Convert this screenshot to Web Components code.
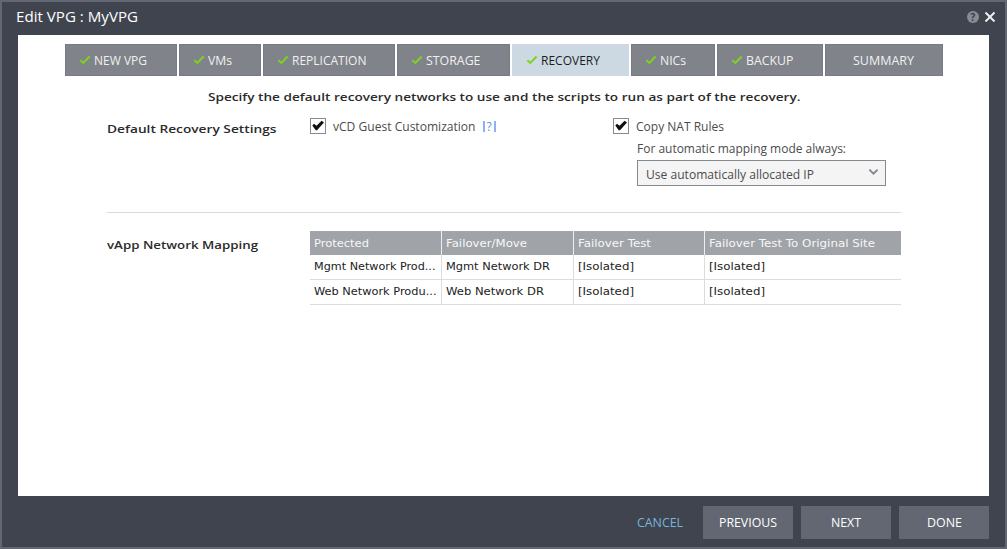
<!DOCTYPE html>
<html lang="en">
<head>
<meta charset="utf-8">
<title>Edit VPG : MyVPG</title>
<style>
html, body { margin: 0; height: 100%; overflow: hidden; }
body { font-family: "Open Sans", sans-serif; font-size: 12px; color: #4c4c4c; }
</style>
</head>
<body>
<vpg-dialog></vpg-dialog>
<script>
function define(name, html, setup) {
  const t = document.createElement('template');
  t.innerHTML = html;
  customElements.define(name, class extends HTMLElement {
    connectedCallback() {
      if (this.shadowRoot) return;
      const root = this.attachShadow({ mode: 'open' });
      root.append(t.content.cloneNode(true));
      if (setup) setup(this, root);
    }
  });
}

/* One line of text stretched horizontally to the width given by "w". */
define('fit-text', `
<style>
:host { display: block; white-space: nowrap; overflow: visible; }
span { display: inline-block; transform-origin: 0 50%; }
</style><span><slot></slot></span>`, (el, root) => {
  const w = parseFloat(el.getAttribute('w'));
  el.style.width = w + 'px';
  const span = root.querySelector('span');
  requestAnimationFrame(() => {
    const n = span.offsetWidth && span.getBoundingClientRect().width;
    if (n) span.style.transform = 'scaleX(' + w / n + ')';
  });
});

define('wizard-tab', `
<style>
:host { display: flex; box-sizing: border-box; height: 32px; align-items: center; padding: 2px 0 0 14px;
  background: #80838a; box-shadow: inset 0 0 0 1px #787b83; color: #f0f0f1; font-size: 12px; line-height: 20px; }
:host([active]) { background: #ccd9e3; box-shadow: none; color: #1d1d1d; }
:host([plain]) { padding-left: 28px; }
:host([plain]) svg { display: none; }
svg { width: 12px; height: 10px; margin: -3px 3px 0 0; flex: none; }
</style>
<svg viewBox="0 0 12 10"><path d="M1.4 5.2 4.3 7.9 10.6 1.6" fill="none" stroke="#7ed321" stroke-width="2.1"/></svg><slot></slot>`);

define('check-box', `
<style>
:host { display: flex; align-items: center; height: 16px; }
.box { box-sizing: border-box; width: 16px; height: 16px; border: 1px solid #858a92; background: #fff; margin-right: 7px; flex: none; }
svg { display: block; width: 14px; height: 14px; }
</style>
<div class="box"><svg viewBox="0 0 14 14"><path d="M1.3 6.5 3 4.7 5.5 6.7 10.6 1.7 13 3.5 6 11.3 4.7 11.3Z" fill="#111"/></svg></div><slot></slot>`);

define('select-box', `
<style>
:host { display: flex; box-sizing: border-box; width: 249px; height: 26px; border: 1px solid #858a92; background: #f4f4f4;
  align-items: center; justify-content: space-between; padding: 3px 6px 0 8px; }
svg { width: 11px; height: 8px; margin-top: -6px; }
</style>
<slot></slot><svg viewBox="0 0 11 8"><path d="M1.4 1.6 5.5 5.7 9.6 1.6" fill="none" stroke="#868a92" stroke-width="2"/></svg>`);

define('push-button', `
<style>
:host { display: flex; width: 90px; height: 33px; align-items: center; justify-content: center; background: #626772; color: #fff; }
</style><slot></slot>`);

define('network-table', `
<style>
:host { display: block; width: 591px; font-family: "DejaVu Sans", Verdana, sans-serif; font-size: 11px; color: #222; }
.row { display: grid; grid-template-columns: 132px 131.5px 131.5px 196px; height: 24px; border-bottom: 1px solid #dcdcdc; }
.row.head { background: #a0a3a8; color: #f7f7f7; border: 0; }
.row > div { box-sizing: border-box; border-right: 1px solid #dcdcdc; padding: 0 0 1px 4px; display: flex; align-items: center; }
.row.head > div { border-color: #eeeeef; padding: 1px 0 0 4px; }
.row > div:last-child { border-right: 0; }
</style>
<div class="row head"><div><fit-text w="55">Protected</fit-text></div><div><fit-text w="81">Failover/Move</fit-text></div><div><fit-text w="73">Failover Test</fit-text></div><div><fit-text w="166">Failover Test To Original Site</fit-text></div></div>
<div class="row"><div><fit-text w="121.5">Mgmt Network Prod...</fit-text></div><div><fit-text w="104">Mgmt Network DR</fit-text></div><div><fit-text w="56">[Isolated]</fit-text></div><div><fit-text w="56">[Isolated]</fit-text></div></div>
<div class="row"><div><fit-text w="122.5">Web Network Produ...</fit-text></div><div><fit-text w="98">Web Network DR</fit-text></div><div><fit-text w="56">[Isolated]</fit-text></div><div><fit-text w="56">[Isolated]</fit-text></div></div>`);

define('vpg-dialog', `
<style>
:host { display: flex; flex-direction: column; box-sizing: border-box; width: 1007px; height: 549px; border: 2px solid #626772; background: #3f444f; padding: 0 16px; }
header { height: 33px; display: flex; justify-content: space-between; align-items: center; color: #fff; font-size: 15px; margin: 0 -7px 0 -2px; }
header fit-text { margin-top: -5px; }
header svg { margin-top: -5px; display: block; }
.icons { display: flex; align-items: center; gap: 5px; }
.help { box-sizing: border-box; width: 12px; height: 12px; border-radius: 50%; background: #888b91; color: #3a3e48; font: bold 10px/12px "Open Sans", sans-serif; text-align: center; margin-top: -3px; }
main { height: 461px; background: #fff; box-sizing: border-box; padding-top: 9px; }
nav { display: grid; grid-template-columns: 112px 82px 132px 113px 117px 84px 106px 118px; gap: 2px; margin-left: 47px; }
.intro { margin: 11px 0 0 190px; font-size: 11.5px; font-weight: 600; line-height: 20px; height: 18px; color: #2b2b2b; }
h2 { margin: 0; font-size: 11.5px; line-height: 18px; font-weight: 600; color: #2b2b2b; }
section { display: grid; grid-template-columns: 203px 303px 288px; margin-left: 89px; width: 794px; }
.settings { height: 108px; box-sizing: border-box; border-bottom: 1px solid #dadada; padding-top: 13px; }
.settings h2 { margin-top: 2px; }
.under { padding-left: 24px; line-height: 17px; }
.under fit-text { margin: 6px 0 3px; }
.under select-box fit-text { margin: 0; }
.hint { color: #5f93dc; border: solid #8db3ec; border-width: 0 2px; height: 11px; line-height: 11px; width: 9px; text-align: center; margin-left: 7px; font-size: 12px; }
.mapping { grid-template-columns: 203px 591px; padding-top: 18px; }
.mapping h2 { margin-top: 5px; }
footer { display: flex; justify-content: flex-end; align-items: center; gap: 8px; padding-top: 10px; height: 33px; }
.cancel { color: #76b5d9; margin-right: 12px; }
</style>
<header><fit-text w="122">Edit VPG : MyVPG</fit-text>
<div class="icons"><div class="help">?</div><svg width="12" height="12" viewBox="0 0 12 12"><path d="M1.5 2.5 10.5 11.5M10.5 2.5 1.5 11.5" stroke="#eee" stroke-width="2"/></svg></div></header>
<main>
<nav>
<wizard-tab><fit-text w="53">NEW VPG</fit-text></wizard-tab>
<wizard-tab><fit-text w="24">VMs</fit-text></wizard-tab>
<wizard-tab><fit-text w="74.5">REPLICATION</fit-text></wizard-tab>
<wizard-tab><fit-text w="54.5">STORAGE</fit-text></wizard-tab>
<wizard-tab active><fit-text w="59">RECOVERY</fit-text></wizard-tab>
<wizard-tab><fit-text w="26">NICs</fit-text></wizard-tab>
<wizard-tab><fit-text w="47.5">BACKUP</fit-text></wizard-tab>
<wizard-tab plain><fit-text w="61">SUMMARY</fit-text></wizard-tab>
</nav>
<div class="intro"><fit-text w="592.5">Specify the default recovery networks to use and the scripts to run as part of the recovery.</fit-text></div>
<section class="settings">
<h2><fit-text w="169.5">Default Recovery Settings</fit-text></h2>
<check-box><fit-text w="142.5">vCD Guest Customization</fit-text><span class="hint">?</span></check-box>
<div><check-box><fit-text w="88">Copy NAT Rules</fit-text></check-box>
<div class="under"><fit-text w="209">For automatic mapping mode always:</fit-text>
<select-box><fit-text w="168">Use automatically allocated IP</fit-text></select-box></div></div>
</section>
<section class="mapping">
<h2><fit-text w="151">vApp Network Mapping</fit-text></h2>
<network-table></network-table>
</section>
</main>
<footer><fit-text class="cancel" w="46">CANCEL</fit-text>
<push-button><fit-text w="58">PREVIOUS</fit-text></push-button>
<push-button><fit-text w="30">NEXT</fit-text></push-button>
<push-button><fit-text w="35">DONE</fit-text></push-button></footer>`);
</script>
</body>
</html>
